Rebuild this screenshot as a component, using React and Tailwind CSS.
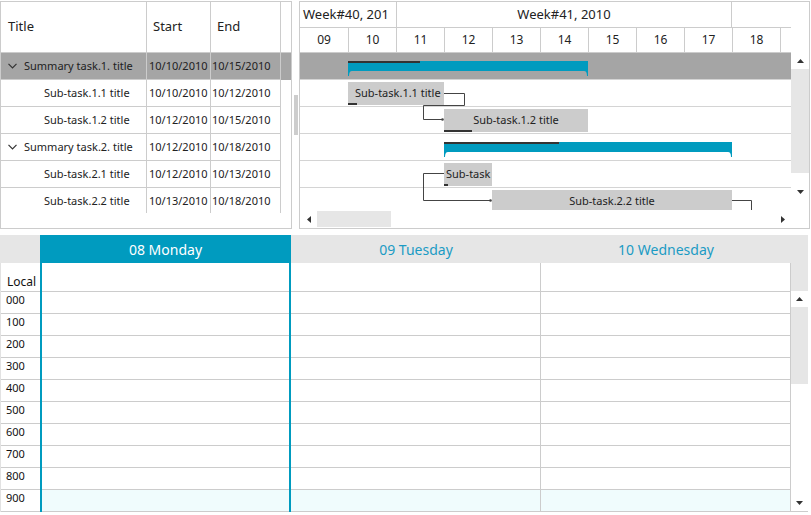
import React from 'react';

const tasks = [
  { title: 'Summary task.1. title', start: '10/10/2010', end: '10/15/2010', summary: true, selected: true },
  { title: 'Sub-task.1.1 title', start: '10/10/2010', end: '10/12/2010' },
  { title: 'Sub-task.1.2 title', start: '10/12/2010', end: '10/15/2010' },
  { title: 'Summary task.2. title', start: '10/12/2010', end: '10/18/2010', summary: true },
  { title: 'Sub-task.2.1 title', start: '10/12/2010', end: '10/13/2010' },
  { title: 'Sub-task.2.2 title', start: '10/13/2010', end: '10/18/2010' },
];

// bars on the timeline, px from the left of the chart (day = 48px)
const bars = [
  { row: 0, summary: true, left: 48, width: 240, done: 72 },
  { row: 1, left: 48, width: 96, done: 9, label: 'Sub-task.1.1 title', pad: 'pl-[7px]' },
  { row: 2, left: 144, width: 144, done: 28, label: 'Sub-task.1.2 title' },
  { row: 3, summary: true, left: 144, width: 288, done: 115 },
  { row: 4, left: 144, width: 48, done: 4, label: 'Sub-task', pad: 'pl-[2px]' },
  { row: 5, left: 192, width: 240, done: 0, label: 'Sub-task.2.2 title' },
];

const days = ['09', '10', '11', '12', '13', '14', '15', '16', '17', '18'];
const hours = ['000', '100', '200', '300', '400', '500', '600', '700', '800', '900'];

const Chevron = () => (
  <svg width="9" height="6" viewBox="0 0 9 6" className="shrink-0">
    <path d="M0.5 0.8 L4.5 4.8 L8.5 0.8" fill="none" stroke="#333" strokeWidth="1.2" />
  </svg>
);

const Arrow = ({ dir }) => {
  const pts = {
    up: '0,4 3.5,0 7,4',
    down: '0,0 3.5,4 7,0',
    left: '4,0 0,3.5 4,7',
    right: '0,0 4,3.5 0,7',
  }[dir];
  const vertical = dir === 'up' || dir === 'down';
  return (
    <svg width={vertical ? 7 : 4} height={vertical ? 4 : 7}>
      <polygon points={pts} fill="#333" />
    </svg>
  );
};

const SummaryBar = ({ left, width, done }) => (
  <svg className="absolute top-[8px]" style={{ left, width }} height="15" viewBox={`0 0 ${width} 15`}>
    <path
      d={`M0 0 H${width} V15 H${width - 1} Q${width - 1} 10 ${width - 4} 10 H4 Q1 10 1 15 H0 Z`}
      fill="#009bbf"
    />
    <rect x="0" y="0" width={done} height="2" fill="#333" />
  </svg>
);

const TaskBox = ({ left, width, done, label, pad }) => (
  <div
    className={`absolute top-[2px] h-[23px] bg-[#cccccc] flex items-center overflow-hidden text-[11px] text-[#222] whitespace-nowrap ${
      pad ? `${pad} justify-start` : 'justify-center'
    }`}
    style={{ left, width }}
  >
    {label}
    {done > 0 && <div className="absolute left-0 bottom-0 h-[2px] bg-[#333]" style={{ width: done }} />}
  </div>
);

const TaskGrid = () => (
  <div className="w-[292px] h-[228px] border border-[#cccccc] flex flex-col">
    <div className="h-[51px] flex border-b border-[#cccccc] text-[13px] text-[#222]">
      <div className="w-[146px] border-r border-[#cccccc] flex items-center pl-[7px]">Title</div>
      <div className="w-[64px] border-r border-[#cccccc] flex items-center pl-[6px]">Start</div>
      <div className="w-[70px] border-r border-[#cccccc] flex items-center pl-[6px]">End</div>
      <div className="flex-1" />
    </div>
    <div className="h-[160px] overflow-hidden">
      {tasks.map((t, i) => (
        <div key={i} className={`h-[27px] flex text-[11px] text-[#222] ${t.selected ? 'bg-[#a5a5a5]' : ''}`}>
          <div className="w-[146px] border-r border-b border-[#cccccc] flex items-center whitespace-nowrap">
            {t.summary ? (
              <div className="flex items-center pl-[7px] gap-[7px]">
                <Chevron />
                <span>{t.title}</span>
              </div>
            ) : (
              <span className="pl-[43px]">{t.title}</span>
            )}
          </div>
          <div className="w-[64px] border-r border-b border-[#cccccc] flex items-center pl-[2px]">{t.start}</div>
          <div className="w-[70px] border-r border-b border-[#cccccc] flex items-center pl-[1px]">{t.end}</div>
          <div className="flex-1" />
        </div>
      ))}
    </div>
  </div>
);

const Splitter = () => (
  <div className="w-[7px] h-[228px] flex justify-center">
    <div className="w-[4px] h-[40px] mt-[94px] bg-[#cdcdcd]" />
  </div>
);

const Gantt = () => (
  <div className="w-[511px] h-[228px] border border-[#cccccc] flex flex-col text-[#222]">
    <div className="h-[26px] flex text-[13px]">
      <div className="w-[97px] border-r border-b border-[#cccccc] flex items-center pl-[3px] overflow-hidden whitespace-nowrap">
        Week#40, 201
      </div>
      <div className="w-[335px] border-r border-b border-[#cccccc] flex items-center justify-center">Week#41, 2010</div>
      <div className="w-[59px] border-b border-[#cccccc]" />
      <div className="flex-1" />
    </div>
    <div className="h-[25px] flex text-[12px]">
      <div className="w-[491px] flex border-b border-[#cccccc] overflow-hidden">
        {days.map((d, i) => (
          <div
            key={d}
            className={`${i === 0 ? 'w-[49px]' : 'w-[48px]'} shrink-0 border-r border-[#cccccc] flex items-center justify-center`}
          >
            {d}
          </div>
        ))}
      </div>
      <div className="flex-1" />
    </div>
    <div className="h-[157px] flex">
      <div className="w-[491px] relative overflow-hidden">
        {tasks.map((t, i) => (
          <div key={i} className={`h-[27px] border-b border-[#d4d4d4] ${t.selected ? 'bg-[#a5a5a5]' : ''}`} />
        ))}
        {bars.map((b, i) => (
          <div key={i} className="absolute left-0 w-full h-[27px]" style={{ top: b.row * 27 }}>
            {b.summary ? <SummaryBar {...b} /> : <TaskBox {...b} />}
          </div>
        ))}
        <svg className="absolute left-0 top-0" width="491" height="157">
          <g fill="none" stroke="#444" strokeWidth="1">
            <path d="M144 40.5 H164.5 V52.5 H123.5 V66.5 H142" />
            <path d="M144 120.5 H123.5 V147.5 H190" />
            <path d="M432 147.5 H451.5 V157" />
          </g>
          <circle cx="142.5" cy="66.5" r="1.3" fill="#444" />
          <circle cx="190.5" cy="147.5" r="1.3" fill="#444" />
        </svg>
      </div>
      <div className="flex-1 flex flex-col items-center">
        <div className="h-[16px] flex items-center">
          <Arrow dir="up" />
        </div>
        <div className="w-full h-[104px] bg-[#e6e6e6]" />
        <div className="flex-1 flex items-center">
          <Arrow dir="down" />
        </div>
      </div>
    </div>
    <div className="flex-1 flex">
      <div className="w-[491px] flex items-center">
        <div className="w-[17px] flex justify-center">
          <Arrow dir="left" />
        </div>
        <div className="w-[74px] h-[16px] bg-[#e6e6e6]" />
        <div className="flex-1" />
        <div className="w-[17px] flex justify-center">
          <Arrow dir="right" />
        </div>
      </div>
    </div>
  </div>
);

const DayColumn = ({ active }) => (
  <div
    className={`flex flex-col ${
      active ? 'w-[251px] border-l-2 border-r-2 border-[#009bbf]' : 'w-[250px] border-r border-[#cccccc]'
    }`}
  >
    <div className="h-[29px] border-b border-[#cccccc]" />
    {hours.map((h, i) => (
      <div key={h} className={`h-[22px] border-b border-[#cccccc] ${i === 9 ? 'bg-[#f0fcfd]' : ''}`} />
    ))}
  </div>
);

const Scheduler = () => (
  <div className="mt-[6px] w-[808px] flex flex-col">
    <div className="h-[28px] flex bg-[#e6e6e6] text-[14px]">
      <div className="w-[40px]" />
      <div className="w-[251px] bg-[#009bbf] text-white flex items-center justify-center">08 Monday</div>
      <div className="w-[250px] text-[#1b9bc4] flex items-center justify-center">09 Tuesday</div>
      <div className="w-[250px] text-[#1b9bc4] flex items-center justify-center">10 Wednesday</div>
      <div className="flex-1" />
    </div>
    <div className="flex">
      <div className="w-[40px] flex flex-col border-l border-[#e2e2e2] text-[#111]">
        <div className="h-[29px] border-b border-[#cccccc] flex items-end pl-[6px] text-[12px]">Local</div>
        {hours.map((h) => (
          <div key={h} className="h-[22px] border-b border-[#cccccc] pl-[5px] pt-[1px] text-[11px] leading-[14px]">
            {h}
          </div>
        ))}
      </div>
      <DayColumn active />
      <DayColumn />
      <DayColumn />
      <div className="flex-1 flex flex-col items-center border-b border-[#cccccc]">
        <div className="w-full h-[28px] bg-[#e6e6e6]" />
        <div className="h-[16px] flex items-center">
          <Arrow dir="up" />
        </div>
        <div className="w-full h-[77px] bg-[#e6e6e6]" />
        <div className="flex-1" />
        <div className="h-[16px] flex items-center">
          <Arrow dir="down" />
        </div>
      </div>
    </div>
  </div>
);

export default function App() {
  return (
    <div className="w-[811px] h-[515px] bg-white overflow-hidden font-['Noto_Sans',sans-serif]">
      <div className="pt-[1px] flex">
        <TaskGrid />
        <Splitter />
        <Gantt />
      </div>
      <Scheduler />
    </div>
  );
}
